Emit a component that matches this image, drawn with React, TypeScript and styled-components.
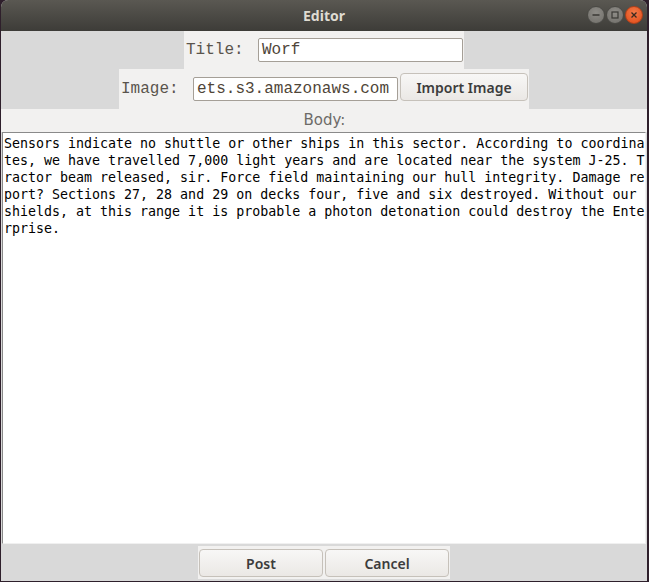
import React from "react";
import styled, { createGlobalStyle } from "styled-components";

const Global = createGlobalStyle`
  html, body { margin: 0; padding: 0; }
  body { background: #2e1f2b; width: 649px; height: 582px; overflow: hidden; }
`;

const Window = styled.div`
  margin-left: 1px;
  width: 646px;
  height: 581px;
  display: flex;
  flex-direction: column;
  background: #d9d9d9;
  border-radius: 7px 7px 0 0;
  overflow: hidden;
`;

const TitleBar = styled.div`
  height: 31px;
  flex: none;
  position: relative;
  display: flex;
  align-items: center;
  justify-content: center;
  background: linear-gradient(#5a5852, #3d3c38);
  font-family: "Noto Sans", "Open Sans", sans-serif;
  font-weight: 700;
  font-size: 14px;
  color: #dfdbd2;
`;

const Controls = styled.div`
  position: absolute;
  right: 4px;
  top: 6px;
  display: flex;
  gap: 1px;
`;

const Ctl = styled.div<{ $close?: boolean }>`
  width: 18px;
  height: 18px;
  border-radius: 50%;
  display: flex;
  align-items: center;
  justify-content: center;
  box-sizing: border-box;
  border: 1px solid ${(p) => (p.$close ? "#b0401a" : "#4a4945")};
  background: ${(p) =>
    p.$close
      ? "radial-gradient(circle at 50% 35%, #f47a48, #df4a17)"
      : "radial-gradient(circle at 50% 35%, #8e8c87, #706e69)"};
`;

const Content = styled.div`
  flex: 1;
  display: flex;
  flex-direction: column;
  align-items: center;
`;

const Frame = styled.div<{ $pt: number; $pb: number }>`
  display: flex;
  align-items: flex-end;
  background: #f2f1f0;
  padding: ${(p) => p.$pt}px 1px ${(p) => p.$pb}px 2px;
`;

const MonoLabel = styled.span<{ $w: number }>`
  width: ${(p) => p.$w}px;
  font-family: "Liberation Mono", monospace;
  font-size: 16px;
  color: #5a544d;
  line-height: 24px;
`;

const Entry = styled.div<{ $w: number }>`
  width: ${(p) => p.$w}px;
  height: 24px;
  box-sizing: border-box;
  border: 1px solid #a59f97;
  border-radius: 2px;
  background: #fff;
  padding: 0 3px;
  font-family: "Liberation Mono", monospace;
  font-size: 16px;
  line-height: 22px;
  color: #4f4538;
  white-space: nowrap;
  overflow: hidden;
`;

const Button = styled.button<{ $w: number; $ml?: number }>`
  width: ${(p) => p.$w}px;
  margin-left: ${(p) => p.$ml ?? 0}px;
  height: 28px;
  box-sizing: border-box;
  border: 1px solid #c6c1ba;
  border-radius: 4px;
  background: linear-gradient(#f8f7f6, #ebe8e5);
  font-family: "Noto Sans", "Open Sans", sans-serif;
  font-weight: 600;
  font-size: 14px;
  color: #3c3c3c;
  padding: 0;
  display: flex;
  align-items: center;
  justify-content: center;
`;

const BodyLabelRow = styled.div`
  align-self: stretch;
  height: 23px;
  background: #f2f1f0;
  display: flex;
  justify-content: center;
  align-items: center;
  font-family: "DejaVu Sans", sans-serif;
  font-size: 15px;
  color: #6d6b68;
  padding: 0 0 2px 1px;
  box-sizing: border-box;
`;

const TextBox = styled.div`
  align-self: stretch;
  margin: 0 1px 0 1px;
  height: 412px;
  box-sizing: border-box;
  background: #fff;
  border-top: 1px solid #8a8a8a;
  border-left: 1px solid #8a8a8a;
  border-right: 1px solid #f0f0f0;
  border-bottom: 1px solid #f0f0f0;
  padding: 2px 0 0 1px;
  font-family: "DejaVu Sans Mono", monospace;
  font-size: 13.3px;
  line-height: 17px;
  color: #000;
  white-space: pre;
  overflow: hidden;
`;

const Footer = styled.div`
  align-self: stretch;
  flex: 1;
  display: flex;
  justify-content: center;
  padding-top: 2px;
`;

const ButtonFrame = styled.div`
  background: #f2f1f0;
  display: flex;
  gap: 2px;
  padding: 3px 1px 0 1px;
  height: 33px;
  box-sizing: border-box;
`;

const lines = [
  "Sensors indicate no shuttle or other ships in this sector. According to coordina",
  "tes, we have travelled 7,000 light years and are located near the system J-25. T",
  "ractor beam released, sir. Force field maintaining our hull integrity. Damage re",
  "port? Sections 27, 28 and 29 on decks four, five and six destroyed. Without our ",
  "shields, at this range it is probable a photon detonation could destroy the Ente",
  "rprise.",
];

export default function App() {
  return (
    <>
      <Global />
      <Window>
        <TitleBar>
          Editor
          <Controls>
            <Ctl>
              <svg width="10" height="10" viewBox="0 0 10 10">
                <path d="M1.5 5h7" stroke="#3a3935" strokeWidth="1.4" />
              </svg>
            </Ctl>
            <Ctl>
              <svg width="10" height="10" viewBox="0 0 10 10">
                <rect x="2" y="2" width="6" height="6" fill="none" stroke="#3a3935" strokeWidth="1.2" />
              </svg>
            </Ctl>
            <Ctl $close>
              <svg width="10" height="10" viewBox="0 0 10 10">
                <path d="M2.5 2.5l5 5M7.5 2.5l-5 5" stroke="#3a2a20" strokeWidth="1.3" />
              </svg>
            </Ctl>
          </Controls>
        </TitleBar>
        <Content>
          <Frame $pt={7} $pb={7}>
            <MonoLabel $w={72}>Title:</MonoLabel>
            <Entry $w={205}>Worf</Entry>
          </Frame>
          <Frame $pt={4} $pb={8}>
            <MonoLabel $w={72}>Image:</MonoLabel>
            <Entry $w={205}>ets.s3.amazonaws.com</Entry>
            <Button $w={128} $ml={2}>Import Image</Button>
          </Frame>
          <BodyLabelRow>Body:</BodyLabelRow>
          <TextBox>{lines.join("\n")}</TextBox>
          <Footer>
            <ButtonFrame>
              <Button $w={124}>Post</Button>
              <Button $w={124}>Cancel</Button>
            </ButtonFrame>
          </Footer>
        </Content>
      </Window>
    </>
  );
}
